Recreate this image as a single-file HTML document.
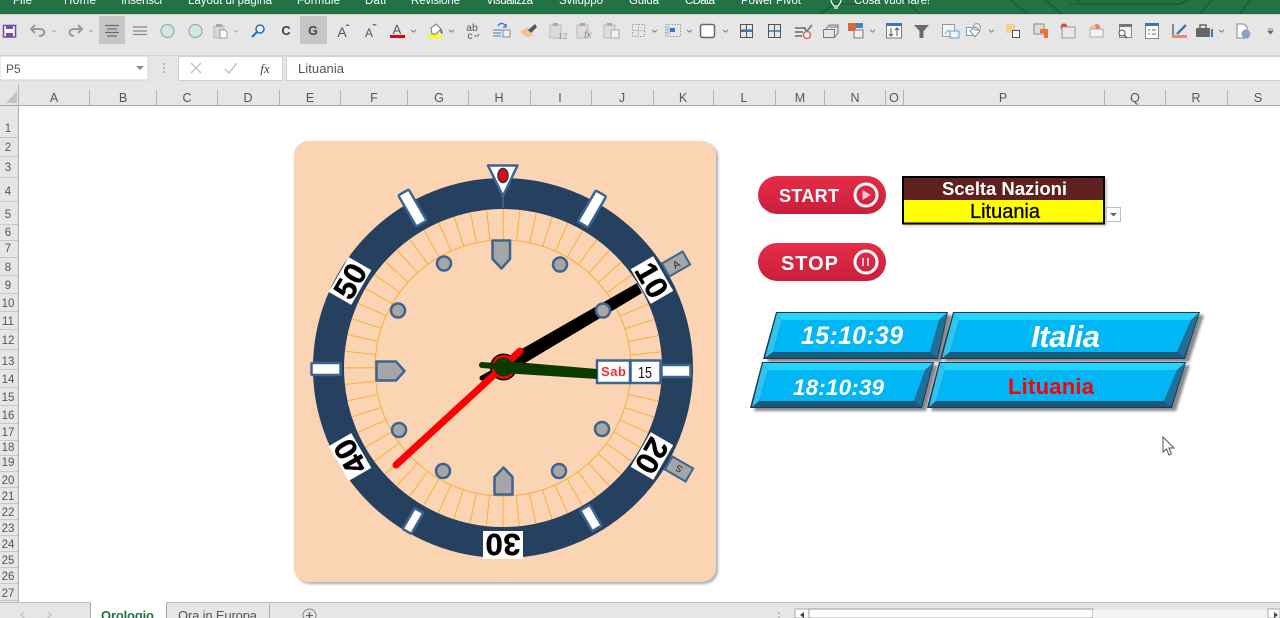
<!DOCTYPE html>
<html><head><meta charset="utf-8"><title>Orologio</title>
<style>
html,body{margin:0;padding:0;background:#fff;width:1280px;height:618px;overflow:hidden}
svg{display:block}
text{font-family:"Liberation Sans",sans-serif}
</style></head><body>
<svg width="1280" height="618" viewBox="0 0 1280 618" xmlns="http://www.w3.org/2000/svg">
<defs>
<linearGradient id="btn" x1="0" y1="0" x2="0" y2="1"><stop offset="0" stop-color="#e62d48"/><stop offset="1" stop-color="#c91f3c"/></linearGradient>
<filter id="soft" x="-5%" y="-5%" width="110%" height="110%"><feGaussianBlur stdDeviation="1.2"/></filter>
</defs>
<!-- ribbon -->
<rect width="1280" height="14" fill="#217346"/>
<g fill="none" stroke="#1a6238" stroke-width="2">
<path d="M820 14 L835 4 H870 M1010 0 L1028 14 M1045 0 L1062 14 M1070 4 H1180 L1188 0 M1075 0 L1083 4 M1200 14 L1212 0 M1240 14 L1250 0 M905 0 L920 14"/>
</g>
<g fill="#fff" font-size="11.5">
<text x="13" y="4" textLength="19">File</text>
<text x="64" y="4" textLength="32">Home</text>
<text x="121" y="4" textLength="41">Inserisci</text>
<text x="188" y="4" textLength="84">Layout di pagina</text>
<text x="297" y="4" textLength="43">Formule</text>
<text x="365" y="4" textLength="21">Dati</text>
<text x="411" y="4" textLength="49">Revisione</text>
<text x="486" y="4" textLength="47">Visualizza</text>
<text x="559" y="4" textLength="44">Sviluppo</text>
<text x="629" y="4" textLength="30">Guida</text>
<text x="685" y="4" textLength="30">CData</text>
<text x="741" y="4" textLength="60">Power Pivot</text>
<text x="854" y="4" textLength="76">Cosa vuoi fare!</text>
</g>
<path d="M831 0 C831 3 833 4 834 6 H838 C839 4 841 3 841 0 M834 8 H838" fill="none" stroke="#fff" stroke-width="1.2"/>
<!-- toolbar -->
<rect y="14" width="1280" height="92" fill="#e6e6e6"/>
<rect y="14" width="1280" height="1" fill="#cfcfcf"/>
<rect y="55" width="1280" height="1" fill="#d2d2d2"/>
<rect x="99" y="16" width="26" height="28" fill="#c6c6c6"/>
<rect x="300" y="16" width="27" height="28" fill="#c6c6c6"/>
<!-- save -->
<rect x="3.5" y="25.5" width="12" height="11.5" fill="#fff" stroke="#7a4fa3" stroke-width="1.6"/>
<rect x="6" y="25" width="7" height="4" fill="#7a4fa3"/><rect x="6" y="33" width="7" height="4" fill="#7a4fa3"/>
<!-- undo/redo -->
<path d="M32 29 H40 C46 29 46 36 39 36 M35 25 L31 29 L35 33" fill="none" stroke="#9a9a9a" stroke-width="2"/>
<path d="M81 29 H74 C68 29 68 36 74 36 M78 25 L82 29 L78 33" fill="none" stroke="#9a9a9a" stroke-width="2"/>
<g fill="none" stroke="#8d8d8d" stroke-width="1.2">
<path d="M52 30 l2 2 l2 -2 M89 30 l2 2 l2 -2 M234 30 l2 2 l2 -2" opacity=".6"/>
<path d="M411 30 l2.5 2 l2.5 -2 M449 30 l2.5 2 l2.5 -2 M652 30 l2.5 2 l2.5 -2 M687 30 l2.5 2 l2.5 -2 M723 30 l2.5 2 l2.5 -2 M870 30 l2.5 2 l2.5 -2 M989 30 l2.5 2 l2.5 -2 M1219 30 l2.5 2 l2.5 -2"/>
</g>
<!-- align -->
<path d="M105 25.5 H119 M107 29 H117 M105 32.5 H119 M107 36 H117" stroke="#6e6e6e" stroke-width="1.2"/>
<path d="M133 27 H147 M133 31 H147 M133 34.5 H147" stroke="#888" stroke-width="1.3"/>
<circle cx="167.500" cy="31" r="6.500" fill="#d2e8dd" stroke="#8fb3a2" stroke-width="1.3"/>
<circle cx="195.500" cy="31" r="6.500" fill="#d2e8dd" stroke="#8fb3a2" stroke-width="1.3"/>
<!-- paste -->
<path d="M214 26 H224 V38 H214 Z" fill="#d7d7d7" stroke="#bbb"/><rect x="216" y="24" width="6" height="3" fill="#aaa"/><path d="M220 30 H225 L227 32 V38 H220 Z" fill="#fff" stroke="#999"/>
<!-- find -->
<circle cx="260" cy="29" r="4" fill="#eaf3fb" stroke="#2f6fb0" stroke-width="1.6"/><path d="M257 32 L252 37" stroke="#2f6fb0" stroke-width="2.2"/>
<text x="286" y="35" font-size="12.500" font-weight="bold" fill="#3f3f3f" text-anchor="middle">C</text>
<text x="313" y="35" font-size="12.500" font-weight="bold" fill="#4a4a4a" text-anchor="middle">G</text>
<text x="342" y="37" font-size="14" fill="#555" text-anchor="middle">A</text><path d="M345 26 l2.500 -2 l2.500 2 Z" fill="#3a78b8"/>
<text x="369" y="37" font-size="12" fill="#555" text-anchor="middle">A</text><path d="M372 24 h5 l-2.500 2 Z" fill="#3a78b8"/>
<text x="397" y="34" font-size="13" fill="#555" text-anchor="middle">A</text><rect x="390" y="35" width="15" height="3" fill="#e60012"/>
<!-- fill -->
<path d="M431 28 L436 24 L441 29 L436 34 H432 Z" fill="#fff" stroke="#777"/><path d="M441 29 c2 2 2 4 1 5 c-2 -1 -2 -3 -1 -5" fill="#3a78b8"/><rect x="428" y="35" width="14" height="3" fill="#ff0"/>
<text x="472" y="31" font-size="10.500" fill="#555" text-anchor="middle">ab</text><text x="470" y="39" font-size="10.500" fill="#555" text-anchor="middle">c</text><path d="M474 36 h4 l1 -2" stroke="#3a78b8" fill="none"/>
<!-- wrap -->
<path d="M493 30 H502 M493 33 H501 M493 36 H501" stroke="#7aa0c6" stroke-width="1.5"/><rect x="503" y="30" width="7" height="7" fill="#eee" stroke="#888"/><path d="M498 26 c2 -4 7 -3 8 1 M506 24 v3 h-3" stroke="#3a78b8" fill="none" stroke-width="1.3"/>
<!-- brush -->
<path d="M520 32 L528 27 L533 36 L526 37 Z" fill="#f2c48d"/><path d="M528 30 L535 24 L537 27 L531 33 Z" fill="#555"/>
<!-- greyed paste icons -->
<g>
<rect x="550" y="25" width="11" height="13" fill="#ddd" stroke="#bbb"/><rect x="553" y="23" width="5" height="3" fill="#aaa"/><text x="558" y="39" font-size="8.500" fill="#999">12</text>
<rect x="577" y="25" width="11" height="13" fill="#ddd" stroke="#bbb"/><rect x="580" y="23" width="5" height="3" fill="#aaa"/><text x="584" y="38" font-size="10" font-style="italic" fill="#888">fx</text>
<rect x="604" y="25" width="11" height="13" fill="#ddd" stroke="#bbb"/><rect x="607" y="23" width="5" height="3" fill="#aaa"/><rect x="611" y="30" width="8" height="8" fill="#f2f2f2" stroke="#aaa"/>
</g>
<!-- table-ish -->
<g fill="none" stroke="#999">
<rect x="632.500" y="24.500" width="12" height="12" stroke-dasharray="1.500 1.500"/><path d="M632 30.500 H645 M638.500 24 V37" stroke="#c4c4c4"/>
<rect x="665.500" y="24.500" width="15" height="12" stroke-dasharray="1.500 1.500"/><rect x="670" y="28" width="5" height="4" fill="#3a78b8" stroke="none"/><rect x="666" y="26" width="4" height="9" fill="#b9cfe6" stroke="none"/>
</g>
<rect x="700.500" y="24.500" width="14" height="13" rx="2" fill="#fff" stroke="#666" stroke-width="1.500"/>
<g fill="none" stroke="#555">
<rect x="740.500" y="24.500" width="12" height="13"/><path d="M740 30 H753 M746.500 24 V38"/><path d="M741 31 H752" stroke="#3a78b8" stroke-width="2"/>
<rect x="768.500" y="24.500" width="12" height="13"/><path d="M768 31 H781 M774.500 24 V38" /><path d="M769 31 H780" stroke="#3a78b8" stroke-width="1.500"/>
<path d="M795 28 H806 M795 32 H803 M795 36 H802" stroke="#888" stroke-width="2"/><path d="M804 28 l3 3 l5 -6" stroke="#3b8a5c" stroke-width="1.500"/>
</g>
<circle cx="807" cy="35" r="3.500" fill="#fff" stroke="#e05a6a" stroke-width="1.500"/>
<g fill="none" stroke="#777"><rect x="823.500" y="29.500" width="11" height="8"/><path d="M826 29 L829 25 H838 V33 L835 37 M829 27 H838"/></g>
<rect x="848" y="23" width="8" height="8" fill="#d9683c"/><rect x="856" y="23" width="7" height="5" fill="#4d7ec0"/><rect x="854" y="30" width="9" height="8" fill="#eee" stroke="#777"/>
<!-- sort -->
<rect x="886.500" y="23.500" width="15" height="14.500" fill="#fff" stroke="#777"/><rect x="886" y="23" width="16" height="3" fill="#3a78b8"/><path d="M891 28 V36 M889 34 l2 2 l2 -2 M897 36 V28 M895 30 l2 -2 l2 2" stroke="#2f5f90" fill="none"/>
<path d="M914 25 H929 L923.500 31 V38 L919.500 38 V31 Z" fill="#6a6a6a"/>
<rect x="942.500" y="24.500" width="12" height="12" fill="#f5f5f5" stroke="#999"/><rect x="950" y="31" width="9" height="7" fill="#eaf3fb" stroke="#6a9ecb"/><path d="M945 34 L948 30 L950 33" stroke="#9ab" fill="none"/>
<rect x="966.500" y="27.500" width="9" height="8" fill="#fff" stroke="#6a9ecb"/><path d="M975 27 L980 31 L975 37 L970 31 Z" fill="#fff" stroke="#888"/><circle cx="977" cy="27" r="3.500" fill="none" stroke="#8aa" />
<rect x="1006" y="24" width="9" height="9" fill="#f7cf8f"/><rect x="1012.500" y="30.500" width="7" height="7" fill="#fff" stroke="#555"/>
<rect x="1034" y="24" width="10" height="10" fill="#ddd" stroke="#888"/><path d="M1040 29 H1048 V38 H1044 V33 H1040 Z" fill="#e8762c"/>
<circle cx="1064" cy="27" r="3.500" fill="#e0432c"/><rect x="1062" y="27" width="13" height="11" fill="#e8e8e8" stroke="#999"/>
<circle cx="1097" cy="27" r="3" fill="#e87a8a"/><circle cx="1093" cy="28" r="3" fill="#f3c57a"/><rect x="1090" y="29" width="13" height="8" fill="#f3f3f3" stroke="#aaa"/>
<rect x="1119.500" y="24.500" width="12" height="13" fill="#f3f3f3" stroke="#888"/><rect x="1119" y="24" width="13" height="3" fill="#777"/><circle cx="1122" cy="33" r="3" fill="#fff" stroke="#555"/><path d="M1124 35 l3 3" stroke="#555" stroke-width="1.400"/>
<rect x="1145.500" y="23.500" width="13" height="15" fill="#fff" stroke="#888"/><rect x="1145" y="23" width="14" height="3" fill="#3a78b8"/><path d="M1148 30 h2 M1152 30 h4 M1148 34 h2 M1152 34 h4" stroke="#666"/>
<path d="M1173 24 V37 H1186" fill="none" stroke="#555" stroke-width="1.300"/><path d="M1177 34 L1186 25" stroke="#3a78b8" stroke-width="2.500"/><rect x="1172" y="35" width="15" height="3" fill="#e88b7a"/>
<rect x="1196" y="28" width="14" height="9" rx="1" fill="#666"/><path d="M1200 28 V25 H1206 V28" fill="none" stroke="#666" stroke-width="1.500"/><rect x="1211" y="29" width="2" height="8" fill="#3a78b8"/>
<path d="M1237 24 H1244 L1247 27 V38 H1237 Z" fill="#fff" stroke="#888"/><circle cx="1246" cy="34" r="4.500" fill="#7fa5cc"/>
<path d="M1268 29 h5 M1268 31 l2.500 3 l2.500 -3 Z" stroke="#666" fill="#666" stroke-width=".8"/>
<!-- formula bar -->
<rect x="0" y="56" width="148" height="24" fill="#fff" stroke="#d0d0d0"/>
<text x="6" y="73" font-size="12" fill="#555">P5</text>
<path d="M136 66 h8 l-4 4 Z" fill="#888"/>
<path d="M164 63 v2 M164 67 v2 M164 71 v2" stroke="#999" stroke-width="1.200"/>
<rect x="178.500" y="56.500" width="104" height="24" fill="#fff" stroke="#d0d0d0"/>
<path d="M191 63 L201 73 M201 63 L191 73" stroke="#c4c4c4" stroke-width="1.400"/>
<path d="M225 69 L229 73 L237 63" stroke="#c4c4c4" stroke-width="1.500" fill="none"/>
<text x="265" y="73" font-size="13" font-style="italic" fill="#444" text-anchor="middle" style="font-family:'Liberation Serif',serif">fx</text>
<rect x="286.500" y="56.500" width="1000" height="24" fill="#fff" stroke="#d0d0d0"/>
<text x="298" y="73" font-size="13" fill="#555" textLength="46">Lituania</text>
<!-- header -->
<rect x="0" y="105" width="1280" height="1" fill="#a8a8a8"/>
<path d="M17 91 V103 H6 Z" fill="#c2c2c2"/>
<path d="M18.500 84 V106 M89.500 90 V105 M156.500 90 V105 M217.500 90 V105 M279.500 90 V105 M340.500 90 V105 M407.500 90 V105 M468.500 90 V105 M530.500 90 V105 M591.500 90 V105 M653.500 90 V105 M713.500 90 V105 M775.500 90 V105 M824.500 90 V105 M885.500 90 V105 M903.500 90 V105 M1104.500 90 V105 M1165.500 90 V105 M1227.500 90 V105" stroke="#b4b4b4"/>
<g font-size="12.500" fill="#555" text-anchor="middle">
<text x="54" y="102">A</text><text x="123" y="102">B</text><text x="187" y="102">C</text><text x="248" y="102">D</text><text x="310" y="102">E</text><text x="374" y="102">F</text><text x="439" y="102">G</text><text x="499" y="102">H</text><text x="560" y="102">I</text><text x="622" y="102">J</text><text x="683" y="102">K</text><text x="744" y="102">L</text><text x="800" y="102">M</text><text x="855" y="102">N</text><text x="894" y="102">O</text><text x="1003" y="102">P</text><text x="1135" y="102">Q</text><text x="1196" y="102">R</text><text x="1258" y="102">S</text>
</g>
<!-- row header -->
<rect x="0" y="106" width="18" height="497" fill="#e6e6e6"/>
<rect x="18" y="106" width="1" height="497" fill="#b0b0b0"/>
<g font-size="11.500" fill="#555" text-anchor="middle">
<text x="8" y="132">1</text><text x="8" y="151">2</text><text x="8" y="171">3</text><text x="8" y="195">4</text><text x="8" y="218">5</text><text x="8" y="236">6</text><text x="8" y="252">7</text><text x="8" y="271">8</text><text x="8" y="289">9</text><text x="8" y="307">10</text><text x="8" y="325">11</text><text x="8" y="344">12</text><text x="8" y="365">13</text><text x="8" y="383">14</text><text x="8" y="401">15</text><text x="8" y="419">16</text><text x="8" y="436">17</text><text x="8" y="451">18</text><text x="8" y="466">19</text><text x="8" y="484">20</text><text x="8" y="500">21</text><text x="8" y="516">22</text><text x="8" y="532">23</text><text x="8" y="548">24</text><text x="8" y="564">25</text><text x="8" y="580">26</text><text x="8" y="597">27</text>
</g>
<path d="M0 137.500 H18 M0 156.500 H18 M0 177.500 H18 M0 201.500 H18 M0 224.500 H18 M0 240.500 H18 M0 257.500 H18 M0 275.500 H18 M0 293.500 H18 M0 311.500 H18 M0 329.500 H18 M0 349.500 H18 M0 369.500 H18 M0 387.500 H18 M0 405.500 H18 M0 423.500 H18 M0 440.500 H18 M0 455.500 H18 M0 471.500 H18 M0 487.500 H18 M0 503.500 H18 M0 519.500 H18 M0 535.500 H18 M0 551.500 H18 M0 567.500 H18 M0 583.500 H18 M0 600.500 H18" stroke="#c8c8c8"/>
<!-- tabs -->
<rect x="0" y="603" width="1280" height="15" fill="#e6e6e6"/>
<rect x="0" y="602" width="1280" height="1" fill="#bdbdbd"/>
<rect x="91" y="602" width="75" height="16" fill="#fff"/>
<path d="M90.500 603 V618 M166.500 603 V618 M269.500 604 V618" stroke="#a8a8a8"/>
<path d="M24 612 l-3 3 l3 3 M48 612 l3 3 l-3 3" fill="none" stroke="#c4c4c4" stroke-width="1.500"/>
<text x="101" y="620" font-size="13" font-weight="bold" fill="#217346" textLength="53">Orologio</text>
<text x="178" y="620" font-size="13" fill="#555" textLength="79">Ora in Europa</text>
<circle cx="309.500" cy="615.500" r="6.500" fill="none" stroke="#888"/><path d="M306 615.500 H313 M309.500 612 V619" stroke="#666" stroke-width="1.300"/>
<path d="M779 612 v2 M779 616 v2" stroke="#999"/>
<rect x="795" y="609" width="14" height="9" fill="#fff" stroke="#aaa"/>
<path d="M804 612 l-4 3 l4 3 Z" fill="#444"/>
<rect x="809" y="609" width="284" height="9" fill="#fff" stroke="#9e9e9e"/>
<rect x="1093" y="610" width="175" height="8" fill="#f4f4f4"/>
<rect x="1268" y="609" width="12" height="9" fill="#fff" stroke="#aaa"/>
<path d="M1274 612 l4 3 l-4 3 Z" fill="#444"/>

<!-- panel -->
<rect x="296" y="143" width="422" height="441" rx="14" fill="#a8aeb6" filter="url(#soft)"/>
<rect x="294" y="141" width="422" height="441" rx="14" fill="#fbd4b4"/>
<!-- bezel -->
<circle cx="503" cy="368" r="174.500" fill="none" stroke="#264060" stroke-width="31"/>
<!-- ticks -->
<circle cx="503" cy="368" r="143.500" fill="none" stroke="#f9ae3a" stroke-width="31" stroke-dasharray="1 14.027" stroke-dashoffset=".5"/>
<circle cx="503" cy="368" r="128" fill="none" stroke="#f9ae3a" stroke-width="1"/>
<!-- bezel markers -->
<g fill="#fff" stroke="#3d6491" stroke-width="2.500" stroke-linejoin="round">
<rect x="-6" y="-18" width="12" height="36" rx="1.500" transform="translate(412.500 208) rotate(-30)"/>
<rect x="-6" y="-18" width="12" height="36" rx="1.500" transform="translate(592 209) rotate(30)"/>
<rect x="-14.500" y="-6" width="29" height="12" rx="1" transform="translate(326 369)"/>
<rect x="-14.500" y="-6" width="29" height="12" rx="1" transform="translate(676 371)"/>
<rect x="-5.500" y="-12" width="11" height="24" rx="1" transform="translate(591 518) rotate(-30)"/>
<rect x="-5" y="-12" width="10" height="24" rx="1" transform="translate(413 521) rotate(30)"/>
</g>
<!-- tabs A / S -->
<g transform="translate(676 264) rotate(-30)"><rect x="-12" y="-7.500" width="24" height="15" fill="#a6a6a6" stroke="#3d6491" stroke-width="2"/><text x="0" y="4" font-size="10" text-anchor="middle" fill="#222">A</text></g>
<g transform="translate(679 469) rotate(30)"><rect x="-12" y="-7.500" width="24" height="15" fill="#a6a6a6" stroke="#3d6491" stroke-width="2"/><text x="0" y="3.500" font-size="9.500" text-anchor="middle" fill="#222" transform="rotate(180)">S</text></g>
<!-- numbers -->
<g font-size="31" font-weight="bold" fill="#000" stroke="#000" stroke-width=".4" text-anchor="middle">
<g transform="translate(350 281) rotate(-60)"><rect x="-20" y="-13" width="40" height="26" fill="#fff" stroke="none"/><text y="11" textLength="35">50</text></g>
<g transform="translate(652 280) rotate(60)"><rect x="-20" y="-13" width="40" height="26" fill="#fff" stroke="none"/><text y="11" textLength="35">10</text></g>
<g transform="translate(652 456) rotate(120)"><rect x="-20" y="-13" width="40" height="26" fill="#fff" stroke="none"/><text y="11" textLength="35">20</text></g>
<g transform="translate(503 545) rotate(180)"><rect x="-20" y="-14" width="40" height="28" fill="#fff" stroke="none"/><text y="11" textLength="35">30</text></g>
<g transform="translate(350 457) rotate(240)"><rect x="-20" y="-13" width="40" height="26" fill="#fff" stroke="none"/><text y="11" textLength="35">40</text></g>
</g>
<!-- top triangle -->
<path d="M503 197 V208" stroke="#5b7c9f" stroke-width="1"/>
<path d="M488 165.500 H517.500 L503 196 Z" fill="#fff" stroke="#3d6491" stroke-width="2.500" stroke-linejoin="round"/>
<ellipse cx="503" cy="175.500" rx="5" ry="7" fill="#d8101c" stroke="#333" stroke-width="1.500"/>
<!-- dial markers -->
<g fill="#a6a6a6" stroke="#3d6491" stroke-width="2.500" stroke-linejoin="round">
<path d="M492.500 240.500 H510 V259 L501.500 268.500 L492.500 259 Z"/>
<path d="M376.500 361.500 H396 L404.500 371 L396 380.500 H376.500 Z"/>
<path d="M494.500 494.500 V477 L503.500 467.500 L512.500 477 V494.500 Z"/>
<circle cx="444" cy="263.500" r="7"/><circle cx="560" cy="264.500" r="7"/>
<circle cx="398" cy="310.500" r="7"/>
<circle cx="399" cy="430" r="7"/><circle cx="602" cy="429" r="7"/>
<circle cx="443" cy="471" r="7"/><circle cx="559" cy="471" r="7"/>
</g>
<!-- date -->
<rect x="597" y="360.500" width="33" height="22.500" fill="#fff" stroke="#3d6491" stroke-width="2.500"/>
<rect x="630.500" y="360.500" width="30" height="22.500" fill="#fff" stroke="#3d6491" stroke-width="2.500"/>
<text x="613.500" y="376" font-size="13" font-weight="bold" fill="#f03030" text-anchor="middle" textLength="25">Sab</text>
<text x="645" y="378" font-size="16" fill="#111" text-anchor="middle" textLength="14" lengthAdjust="spacingAndGlyphs">15</text>
<!-- hands -->
<path d="M499 362 L637 283 L642 293 L510 372 Z" fill="#000"/>
<path d="M482 378 L500 368" stroke="#000" stroke-width="5" stroke-linecap="round"/>
<circle cx="603" cy="310.500" r="7" fill="#a6a6a6" stroke="#3d6491" stroke-width="2.500"/>
<circle cx="503.500" cy="367" r="13.500" fill="#000"/>
<circle cx="503.500" cy="367" r="12" fill="#f00"/>
<path d="M396 465 L520 351" stroke="#f00" stroke-width="7" stroke-linecap="round"/>
<path d="M503 361 L597 369 L597 379 L503 373 Z" fill="#0a3a00"/>
<path d="M482 365 L500 366.500" stroke="#0a3a00" stroke-width="6" stroke-linecap="round"/>
<circle cx="503.500" cy="367" r="9.500" fill="#0a3a00"/>
<!-- buttons -->
<rect x="758" y="176" width="128" height="38" rx="19" fill="url(#btn)"/>
<rect x="758" y="243" width="128" height="38" rx="19" fill="url(#btn)"/>
<text x="779" y="202" font-size="18" font-weight="bold" fill="#fff" textLength="60">START</text>
<text x="781" y="270" font-size="20" font-weight="bold" fill="#fff" textLength="57">STOP</text>
<circle cx="866" cy="195" r="11" fill="none" stroke="#fff" stroke-width="3"/>
<path d="M862.500 190 L871 195 L862.500 200 Z" fill="#f6c6cf"/>
<circle cx="866" cy="262" r="11" fill="none" stroke="#fff" stroke-width="3"/>
<path d="M863 258 V266 M868 258 V266" stroke="#f6c6cf" stroke-width="2"/>
<!-- table -->
<rect x="904" y="178" width="203" height="48" fill="#c8c8c8" filter="url(#soft)"/>
<rect x="903" y="177" width="201" height="23" fill="#5f2020"/>
<rect x="903" y="200" width="201" height="23" fill="#ff0"/>
<rect x="903" y="177" width="201" height="46.500" fill="none" stroke="#000" stroke-width="2"/>
<text x="1004.500" y="195" font-size="18.500" font-weight="bold" fill="#fff" text-anchor="middle" textLength="125">Scelta Nazioni</text>
<text x="1005" y="218" font-size="20" fill="#000" stroke="#000" stroke-width=".3" text-anchor="middle" textLength="70">Lituania</text>
<rect x="1106.500" y="207.500" width="14" height="14" fill="#fff" stroke="#b4c4ce"/>
<path d="M1110 213 h7 l-3.500 3.500 Z" fill="#666"/>
<!-- blue panels -->
<g>
<g fill="#8a8a8a" filter="url(#soft)">
<path d="M780 315 H952 L942 362 H767 Z"/>
<path d="M957 315 H1204 L1189 362 H944 Z"/>
<path d="M766 365 H938 L926 411 H754 Z"/>
<path d="M943 365 H1190 L1176 411 H931 Z"/>
</g>
<!-- P1 -->
<path d="M776 312 H948 L938 359 H763 Z" fill="#1c3a55"/>
<path d="M777 313 H947 L939 320 H782 Z" fill="#24d4ff"/>
<path d="M777 313 L782 320 L773 352 L765 358 Z" fill="#30c4ee"/>
<path d="M947 313 L937 358 L930 352 L939 320 Z" fill="#1f6f98"/>
<path d="M765 358 H937 L930 352 H773 Z" fill="#1a587c"/>
<path d="M782 320 H939 L930 352 H773 Z" fill="#00b6f5"/>
<!-- P2 -->
<path d="M953 312 H1200 L1185 359 H940 Z" fill="#1c3a55"/>
<path d="M954 313 H1199 L1191 320 H959 Z" fill="#24d4ff"/>
<path d="M954 313 L959 320 L950 352 L942 358 Z" fill="#30c4ee"/>
<path d="M1199 313 L1184 358 L1177 352 L1191 320 Z" fill="#1f6f98"/>
<path d="M942 358 H1184 L1177 352 H950 Z" fill="#1a587c"/>
<path d="M959 320 H1191 L1177 352 H950 Z" fill="#00b6f5"/>
<!-- P3 -->
<path d="M762 362 H934 L922 408 H750 Z" fill="#1c3a55"/>
<path d="M763 363 H933 L925 370 H768 Z" fill="#24d4ff"/>
<path d="M763 363 L768 370 L759 401 L752 407 Z" fill="#30c4ee"/>
<path d="M933 363 L921 407 L914 401 L925 370 Z" fill="#1f6f98"/>
<path d="M752 407 H921 L914 401 H759 Z" fill="#1a587c"/>
<path d="M768 370 H925 L914 401 H759 Z" fill="#00b6f5"/>
<!-- P4 -->
<path d="M939 362 H1186 L1172 408 H927 Z" fill="#1c3a55"/>
<path d="M940 363 H1185 L1177 370 H945 Z" fill="#24d4ff"/>
<path d="M940 363 L945 370 L936 401 L929 407 Z" fill="#30c4ee"/>
<path d="M1185 363 L1171 407 L1164 401 L1177 370 Z" fill="#1f6f98"/>
<path d="M929 407 H1171 L1164 401 H936 Z" fill="#1a587c"/>
<path d="M945 370 H1177 L1164 401 H936 Z" fill="#00b6f5"/>
</g>
<g font-weight="bold" font-style="italic" fill="#fff">
<text x="801" y="344" font-size="25" textLength="102">15:10:39</text>
<text x="1031" y="347" font-size="31" textLength="69">Italia</text>
<text x="793" y="395" font-size="22.500" textLength="91">18:10:39</text>
</g>
<text x="1008" y="394" font-size="22" font-weight="bold" fill="#f00" textLength="86">Lituania</text>
<!-- cursor -->
<path d="M1163 437 V452 L1166.500 449 L1169 455 L1171.500 454 L1169 448 L1174 448 Z" fill="#fff" stroke="#555" stroke-width="1"/>
</svg>
</body></html>
